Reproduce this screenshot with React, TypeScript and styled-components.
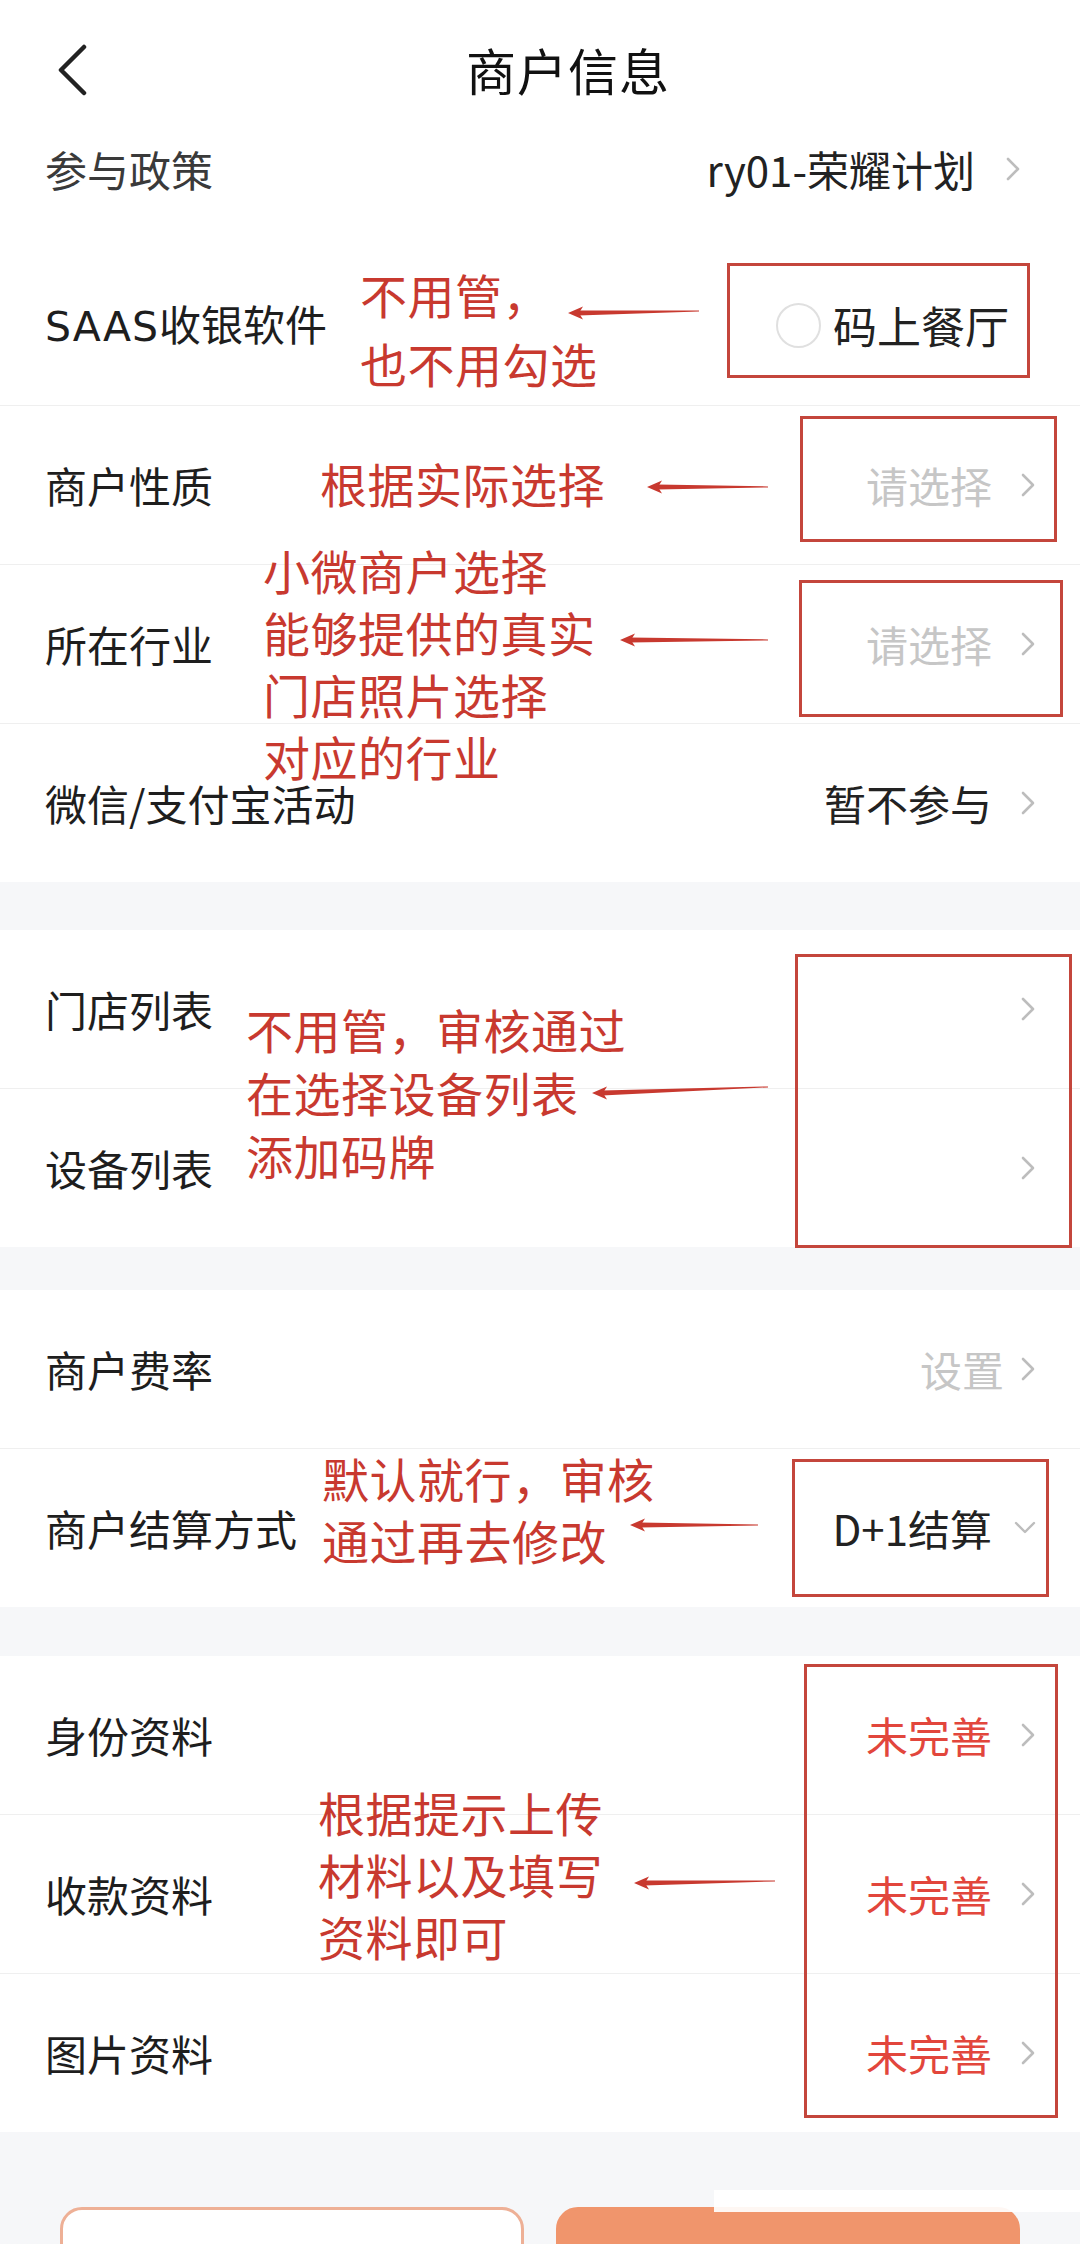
import React from 'react';
import styled, { createGlobalStyle } from 'styled-components';

const GlobalStyle = createGlobalStyle`
  html, body {
    margin: 0;
    padding: 0;
    background: #f6f7f9;
  }
  * {
    box-sizing: border-box;
  }
  body {
    font-family: "Noto Sans CJK SC", "Noto Sans", sans-serif;
  }
`;

const RED = '#c8392f';

const Page = styled.div`
  position: relative;
  width: 1080px;
  height: 2244px;
  overflow: hidden;
  background: #f6f7f9;
`;

const Header = styled.div`
  height: 138px;
  background: #fff;
  display: grid;
  grid-template-columns: 1fr auto 1fr;
  align-items: center;
  padding: 0 0 0 56px;
`;

const BackButton = styled.div`
  width: 34px;
  height: 52px;
  display: flex;
  align-items: center;
  margin-top: 2px;
`;

const Title = styled.h1`
  margin: 0;
  font-size: 50px;
  font-weight: 400;
  color: #111;
  letter-spacing: 1px;
`;

const Section = styled.div<{ $gap?: number }>`
  background: #fff;
  margin-top: ${(p) => p.$gap ?? 0}px;
`;

const Row = styled.div<{ $h?: number; $divided?: boolean; $top?: boolean }>`
  height: ${(p) => p.$h ?? 159}px;
  display: flex;
  align-items: ${(p) => (p.$top ? 'flex-start' : 'center')};
  justify-content: space-between;
  padding: ${(p) => (p.$top ? '2px' : '0')} 44px 0 45px;
  border-top: ${(p) => (p.$divided ? '1px solid #efefef' : 'none')};
`;

const Label = styled.span<{ $muted?: boolean }>`
  font-size: 42px;
  line-height: 58px;
  color: ${(p) => (p.$muted ? '#3a3a3a' : '#1e1e1e')};
`;

const Latin = styled.span`
  font-family: "DejaVu Sans", "Noto Sans", sans-serif;
  font-size: 41px;
  letter-spacing: 1px;
`;

const ValueWrap = styled.div<{ $gap?: number; $pr?: number }>`
  display: flex;
  align-items: center;
  gap: ${(p) => p.$gap ?? 28}px;
  padding-right: ${(p) => p.$pr ?? 0}px;
`;

const Value = styled.span<{ $tone?: 'dark' | 'placeholder' | 'alert' }>`
  font-size: 42px;
  line-height: 58px;
  color: ${(p) =>
    p.$tone === 'placeholder' ? '#c6c6c6' : p.$tone === 'alert' ? '#e2463c' : '#222'};
`;

const Radio = styled.span`
  width: 45px;
  height: 45px;
  border-radius: 50%;
  border: 2.5px solid #e0e0e0;
  display: inline-block;
`;

const Footer = styled.div`
  display: flex;
  gap: 32px;
  padding: 75px 60px 0 60px;
`;

const Button = styled.div<{ $primary?: boolean }>`
  flex: 1;
  height: 130px;
  border-radius: 22px;
  background: ${(p) => (p.$primary ? '#f0956c' : '#fff')};
  border: 3px solid ${(p) => (p.$primary ? '#f0956c' : '#eeb096')};
`;

const Watermark = styled.div`
  position: absolute;
  left: 714px;
  top: 2190px;
  width: 366px;
  height: 22px;
  background: rgba(255, 255, 255, 0.92);
`;

const Box = styled.div`
  position: absolute;
  border: 3px solid #c4463c;
  pointer-events: none;
`;

const Note = styled.div<{ $lh?: number }>`
  position: absolute;
  font-size: 47px;
  line-height: ${(p) => p.$lh ?? 63}px;
  color: ${RED};
  white-space: pre;
  letter-spacing: 0.5px;
`;

const ArrowSvg = styled.svg`
  position: absolute;
  overflow: visible;
`;

const Chevron = ({ color = '#bdbdbd' }: { color?: string }) => (
  <svg width="16" height="26" viewBox="0 0 16 26">
    <path d="M3 3 L13 13 L3 23" fill="none" stroke={color} strokeWidth="2.6" strokeLinecap="round" strokeLinejoin="round" />
  </svg>
);

const ChevronDown = () => (
  <svg width="22" height="14" viewBox="0 0 22 14">
    <path d="M2 2 L11 11 L20 2" fill="none" stroke="#bdbdbd" strokeWidth="2.4" strokeLinecap="round" strokeLinejoin="round" />
  </svg>
);

const BackIcon = () => (
  <svg width="32" height="52" viewBox="0 0 32 52">
    <path d="M28 3 L5 26 L28 49" fill="none" stroke="#222" strokeWidth="4.5" strokeLinecap="round" strokeLinejoin="round" />
  </svg>
);

type ArrowProps = { x1: number; x2: number; y: number; yEnd?: number };

// hand-drawn style arrow: tip on the left, shaft tapering to the right
const Arrow = ({ x1, x2, y, yEnd }: ArrowProps) => {
  const w = x2 - x1;
  const dy = (yEnd ?? y) - y;
  return (
    <ArrowSvg style={{ left: x1, top: y - 10 }} width={w} height={20} viewBox={`0 0 ${w} 20`}>
      <polygon
        points={`10,7.6 ${w},${9.4 + dy} ${w},${10.4 + dy} 10,12.4`}
        fill={RED}
      />
      <polygon points="0,10 15,3.5 11,10 15,16.5" fill={RED} />
    </ArrowSvg>
  );
};

const App = () => {
  return (
    <Page>
      <GlobalStyle />
      <Header>
        <BackButton>
          <BackIcon />
        </BackButton>
        <Title>商户信息</Title>
        <div />
      </Header>

      <Section>
        <Row $h={107} $top>
          <Label $muted>参与政策</Label>
          <ValueWrap $gap={30} $pr={15}>
            <Value>ry01-荣耀计划</Value>
            <Chevron />
          </ValueWrap>
        </Row>
        <Row $h={160}>
          <Label>
            <Latin>SAAS</Latin>收银软件
          </Label>
          <ValueWrap $gap={12} $pr={27}>
            <Radio />
            <Value style={{ fontSize: 44 }}>码上餐厅</Value>
          </ValueWrap>
        </Row>
        <Row $divided>
          <Label>商户性质</Label>
          <ValueWrap>
            <Value $tone="placeholder">请选择</Value>
            <Chevron />
          </ValueWrap>
        </Row>
        <Row $divided>
          <Label>所在行业</Label>
          <ValueWrap>
            <Value $tone="placeholder">请选择</Value>
            <Chevron />
          </ValueWrap>
        </Row>
        <Row $divided>
          <Label>微信/支付宝活动</Label>
          <ValueWrap>
            <Value>暂不参与</Value>
            <Chevron />
          </ValueWrap>
        </Row>
      </Section>

      <Section $gap={48}>
        <Row $h={158}>
          <Label>门店列表</Label>
          <Chevron />
        </Row>
        <Row $divided>
          <Label>设备列表</Label>
          <Chevron />
        </Row>
      </Section>

      <Section $gap={43}>
        <Row $h={158}>
          <Label>商户费率</Label>
          <ValueWrap $gap={16}>
            <Value $tone="placeholder">设置</Value>
            <Chevron />
          </ValueWrap>
        </Row>
        <Row $divided>
          <Label>商户结算方式</Label>
          <ValueWrap $gap={22}>
            <Value>D+1结算</Value>
            <ChevronDown />
          </ValueWrap>
        </Row>
      </Section>

      <Section $gap={49}>
        <Row $h={158}>
          <Label>身份资料</Label>
          <ValueWrap>
            <Value $tone="alert">未完善</Value>
            <Chevron />
          </ValueWrap>
        </Row>
        <Row $divided>
          <Label>收款资料</Label>
          <ValueWrap>
            <Value $tone="alert">未完善</Value>
            <Chevron />
          </ValueWrap>
        </Row>
        <Row $divided>
          <Label>图片资料</Label>
          <ValueWrap>
            <Value $tone="alert">未完善</Value>
            <Chevron />
          </ValueWrap>
        </Row>
      </Section>

      <Footer>
        <Button />
        <Button $primary />
      </Footer>
      <Watermark />

      {/* annotation layer */}
      <Box style={{ left: 727, top: 263, width: 303, height: 115 }} />
      <Box style={{ left: 800, top: 416, width: 257, height: 126 }} />
      <Box style={{ left: 799, top: 580, width: 264, height: 137 }} />
      <Box style={{ left: 795, top: 954, width: 277, height: 294 }} />
      <Box style={{ left: 792, top: 1459, width: 257, height: 138 }} />
      <Box style={{ left: 804, top: 1664, width: 254, height: 454 }} />

      <Note $lh={69} style={{ left: 360, top: 259 }}>{'不用管，\n也不用勾选'}</Note>
      <Note style={{ left: 320, top: 451 }}>根据实际选择</Note>
      <Note $lh={62} style={{ left: 263, top: 539 }}>{'小微商户选择\n能够提供的真实\n门店照片选择\n对应的行业'}</Note>
      <Note style={{ left: 246, top: 997 }}>{'不用管，审核通过\n在选择设备列表\n添加码牌'}</Note>
      <Note $lh={62} style={{ left: 322, top: 1447 }}>{'默认就行，审核\n通过再去修改'}</Note>
      <Note $lh={62} style={{ left: 318, top: 1781 }}>{'根据提示上传\n材料以及填写\n资料即可'}</Note>

      <Arrow x1={568} x2={699} y={313} yEnd={311} />
      <Arrow x1={647} x2={768} y={487} />
      <Arrow x1={620} x2={768} y={640} />
      <Arrow x1={592} x2={768} y={1093} yEnd={1087} />
      <Arrow x1={630} x2={758} y={1525} />
      <Arrow x1={634} x2={775} y={1883} yEnd={1881} />
    </Page>
  );
};

export default App;
